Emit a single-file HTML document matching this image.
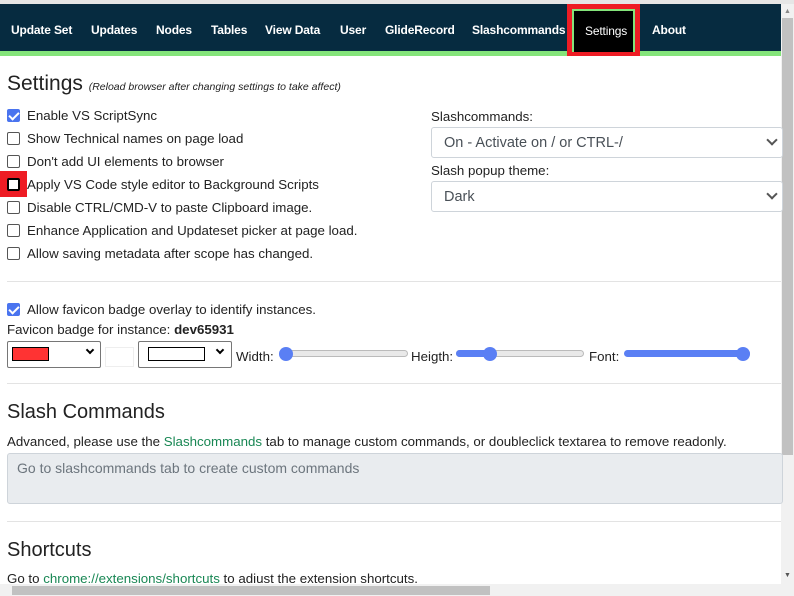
<!DOCTYPE html>
<html><head><style>
*{margin:0;padding:0;box-sizing:border-box}
body{width:794px;height:596px;overflow:hidden;background:#fff;font-family:"Liberation Sans",Arial,sans-serif;color:#212529;position:relative}
.a{position:absolute;white-space:nowrap}
.nav{left:0;top:4px;width:781px;height:48px;background:#062b40}
.green{left:0;top:51px;width:781px;height:5px;background:#84e47a}
.ni{top:23px;color:#fff;font-size:12px;font-weight:bold;letter-spacing:-0.15px}
.cb{width:13px;height:13px;border:1px solid #555;border-radius:2px;background:#fff}
.cbc{background:#4a74ef;border-color:#4a74ef}
.cbc::after{content:"";position:absolute;left:3px;top:0px;width:4px;height:8px;border:solid #fff;border-width:0 2px 2px 0;transform:rotate(45deg)}
.lb{font-size:13.3px;color:#222}
.sel{border:1px solid #ced4da;border-radius:3px;background:#fff;font-size:14.5px;color:#495057;padding:7px 12px}
.hr{height:1px;background:#e3e3e3;left:7px;width:774px}
.trk{height:7px;background:#e9e9e9;border:1px solid #bbb;border-radius:4px}
.th{width:14px;height:14px;border-radius:50%;background:#5a7ff4}
.chev{position:absolute;right:6px;top:8px;width:8px;height:8px;border:solid #555;border-width:0 2px 2px 0;transform:rotate(45deg)}
</style></head><body>
<div class="a" style="left:0;top:0;width:794px;height:4px;background:#e6e6e6"></div>
<div class="a nav"></div>
<div class="a green"></div>
<div class="a ni" style="left:11px">Update Set</div>
<div class="a ni" style="left:91px">Updates</div>
<div class="a ni" style="left:156px">Nodes</div>
<div class="a ni" style="left:211px">Tables</div>
<div class="a ni" style="left:265px">View Data</div>
<div class="a ni" style="left:340px">User</div>
<div class="a ni" style="left:385px">GlideRecord</div>
<div class="a ni" style="left:472px">Slashcommands</div>
<div class="a" style="left:567px;top:4px;width:73px;height:52px;background:#ee1c24"></div>
<div class="a" style="left:572px;top:9px;width:63px;height:43px;background:#000;border:2px solid #84e47a;border-bottom:none"></div>
<div class="a ni" style="left:585px;top:24px;font-weight:normal">Settings</div>
<div class="a ni" style="left:652px">About</div>
<div class="a" style="left:781px;top:4px;width:13px;height:580px;background:#f1f1f1"></div>
<div class="a" style="left:782px;top:18px;width:11px;height:437px;background:#c1c1c1"></div>
<div class="a" style="left:784px;top:8px;font-size:7px;color:#888">▲</div>
<div class="a" style="left:784px;top:572px;font-size:7px;color:#555">▼</div>

<div class="a" style="left:7px;top:72px;font-size:21px;color:#222">Settings <span style="font-size:10.5px;font-style:italic">(Reload browser after changing settings to take affect)</span></div>
<div class="a cb cbc" style="left:7px;top:109px"></div><div class="a lb" style="left:27px;top:108px">Enable VS ScriptSync</div>
<div class="a cb" style="left:7px;top:132px"></div><div class="a lb" style="left:27px;top:131px">Show Technical names on page load</div>
<div class="a cb" style="left:7px;top:155px"></div><div class="a lb" style="left:27px;top:154px">Don't add UI elements to browser</div>
<div class="a" style="left:0;top:171px;width:27px;height:26px;background:#ee1c24"></div>
<div class="a cb" style="left:7px;top:178px;border:2px solid #000"></div><div class="a lb" style="left:27px;top:177px">Apply VS Code style editor to Background Scripts</div>
<div class="a cb" style="left:7px;top:201px"></div><div class="a lb" style="left:27px;top:200px">Disable CTRL/CMD-V to paste Clipboard image.</div>
<div class="a cb" style="left:7px;top:224px"></div><div class="a lb" style="left:27px;top:223px">Enhance Application and Updateset picker at page load.</div>
<div class="a cb" style="left:7px;top:247px"></div><div class="a lb" style="left:27px;top:246px">Allow saving metadata after scope has changed.</div>

<div class="a lb" style="left:431px;top:109px">Slashcommands:</div>
<div class="a sel" style="left:431px;top:127px;width:352px;height:31px">On - Activate on / or CTRL-/<span class="chev"></span></div>
<div class="a lb" style="left:431px;top:163px">Slash popup theme:</div>
<div class="a sel" style="left:431px;top:181px;width:352px;height:31px">Dark<span class="chev"></span></div>

<div class="a hr" style="top:281px"></div>
<div class="a cb cbc" style="left:7px;top:303px"></div><div class="a lb" style="left:27px;top:302px">Allow favicon badge overlay to identify instances.</div>
<div class="a lb" style="left:7px;top:322px">Favicon badge for instance: <b>dev65931</b></div>
<div class="a" style="left:7px;top:341px;width:94px;height:27px;border:1px solid #767676;border-radius:2px;background:#fff"></div>
<div class="a" style="left:12px;top:347px;width:37px;height:14px;background:#ff3333;border:1px solid #000"></div>
<div class="a" style="left:87px;top:347px;width:6px;height:6px;border:solid #000;border-width:0 2px 2px 0;transform:rotate(45deg)"></div>
<div class="a" style="left:105px;top:347px;width:29px;height:20px;border:1px solid #eee"></div>
<div class="a" style="left:138px;top:341px;width:94px;height:27px;border:1px solid #767676;border-radius:2px;background:#fff"></div>
<div class="a" style="left:148px;top:347px;width:57px;height:14px;border:1px solid #000"></div>
<div class="a" style="left:217px;top:347px;width:6px;height:6px;border:solid #000;border-width:0 2px 2px 0;transform:rotate(45deg)"></div>
<div class="a lb" style="left:236px;top:349px">Width:</div>
<div class="a trk" style="left:282px;top:350px;width:126px"></div>
<div class="a th" style="left:279px;top:347px"></div>
<div class="a lb" style="left:411px;top:349px">Heigth:</div>
<div class="a trk" style="left:456px;top:350px;width:128px"></div>
<div class="a" style="left:456px;top:350px;width:34px;height:7px;background:#5a7ff4;border-radius:4px"></div>
<div class="a th" style="left:483px;top:347px"></div>
<div class="a lb" style="left:589px;top:349px">Font:</div>
<div class="a" style="left:624px;top:350px;width:126px;height:7px;background:#5a7ff4;border-radius:4px"></div>
<div class="a th" style="left:736px;top:347px"></div>

<div class="a hr" style="top:383px"></div>
<div class="a" style="left:7px;top:401px;font-size:20px;color:#222">Slash Commands</div>
<div class="a lb" style="left:7px;top:434px">Advanced, please use the <span style="color:#198754">Slashcommands</span> tab to manage custom commands, or doubleclick textarea to remove readonly.</div>
<div class="a" style="left:7px;top:453px;width:776px;height:51px;background:#e9ecef;border:1px solid #ced4da;border-radius:3px;font-size:14px;color:#6c757d;padding:6px 9px">Go to slashcommands tab to create custom commands</div>
<div class="a hr" style="top:521px"></div>
<div class="a" style="left:7px;top:539px;font-size:20px;color:#222">Shortcuts</div>
<div class="a lb" style="left:7px;top:571px">Go to <span style="color:#198754">chrome://extensions/shortcuts</span> to adiust the extension shortcuts.</div>
<div class="a" style="left:0;top:584px;width:794px;height:12px;background:#f1f1f1"></div>
<div class="a" style="left:12px;top:586px;width:478px;height:9px;background:#c1c1c1"></div>
</body></html>
